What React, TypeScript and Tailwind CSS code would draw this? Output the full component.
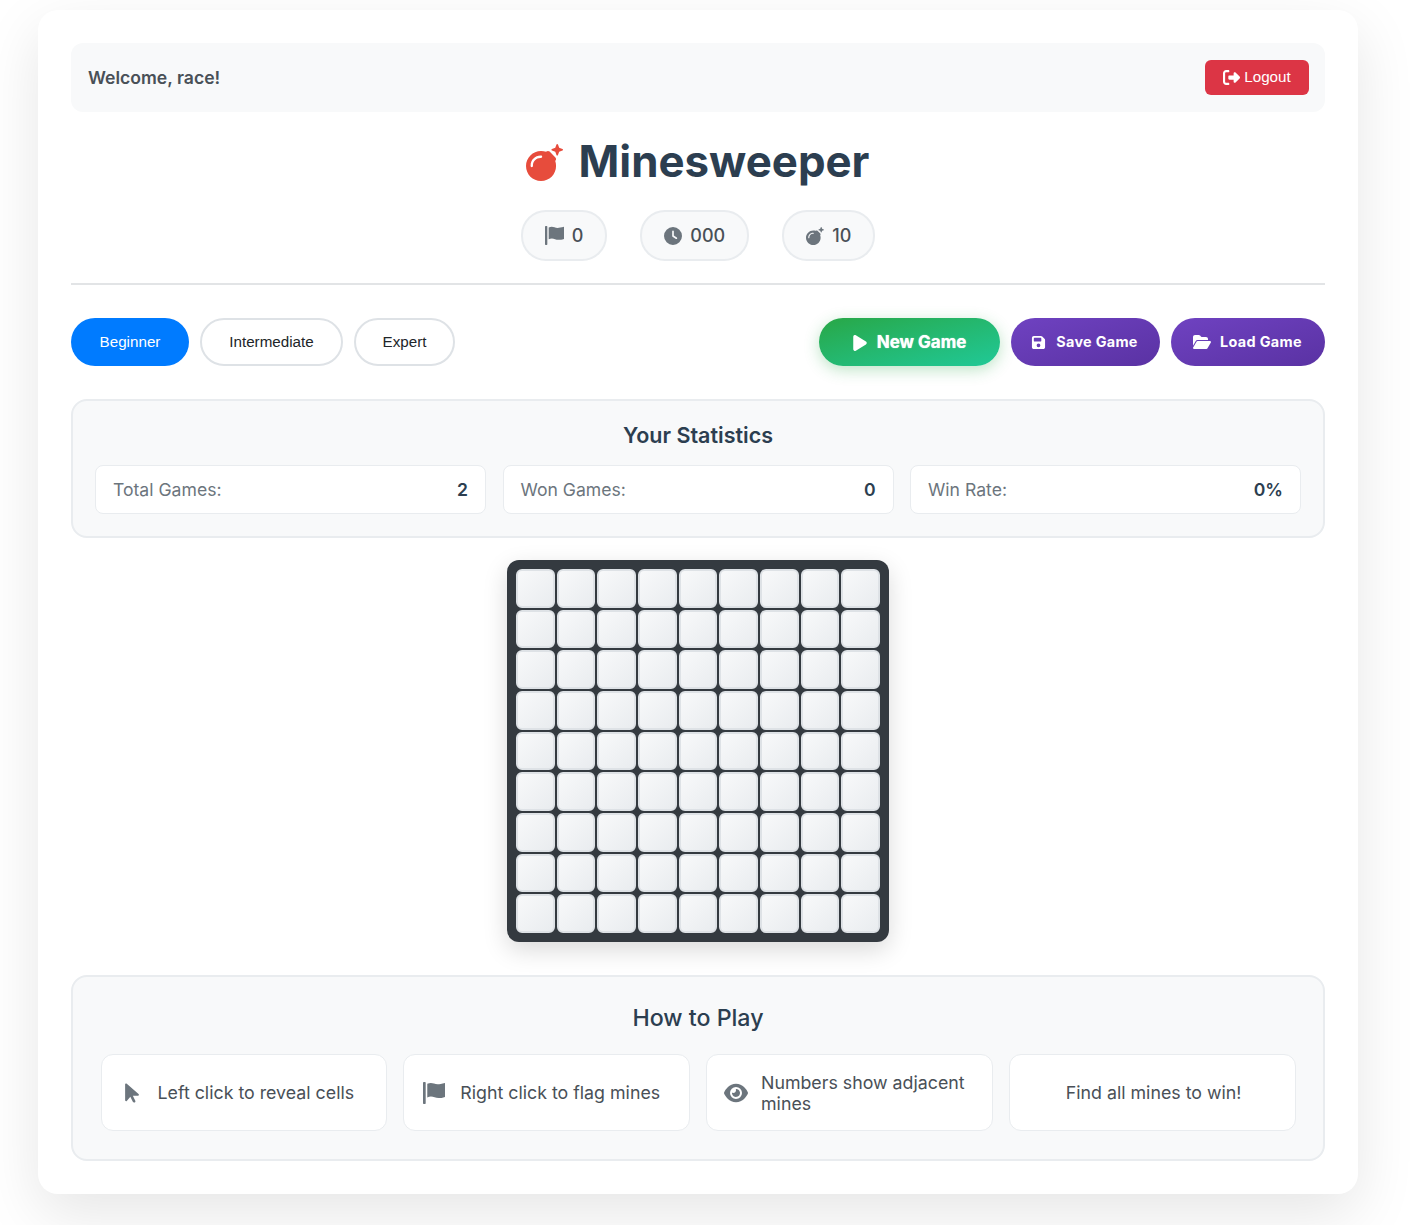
import React from 'react';
import { FaArrowPointer, FaBomb, FaClock, FaEye, FaFloppyDisk, FaFolderOpen, FaPlay, FaRightFromBracket } from 'react-icons/fa6';

const stats = [
  { label: 'Total Games:', value: '2' },
  { label: 'Won Games:', value: '0' },
  { label: 'Win Rate:', value: '0%' },
];

const cells = Array.from({ length: 81 }, (_, i) => i);

function FlagIcon({ size }: { size: number }) {
  return <svg width={size} height={size} viewBox="0 0 18 18" fill="currentColor" className="shrink-0">
      <rect x="0" y="0" width="2.2" height="18" rx="0.6" />
      <path d="M3.5 1.5C5.5 0.5 7 0.5 9 1.3C11 2.1 13 2.2 18 0.8V12.2C14 13.5 11.5 13.3 9.5 12.5C7.5 11.7 5.5 11.6 3.5 12.6Z" />
    </svg>;
}

function StatPill({ icon, value }: { icon: React.ReactNode; value: string }) {
  return <div className="flex h-[51px] items-center gap-[8px] rounded-[25px] border-2 border-[#e9ecef] bg-[#f8f9fa] px-[22px] text-[18px] font-medium text-[#495057]">
      <span className="text-[#6c757d]">{icon}</span>
      <span>{value}</span>
    </div>;
}

export default function App() {
  return <div className="min-h-[1225px] bg-white pl-[38px] pt-[10px] font-['Inter',sans-serif]">
      <div className="h-[1184px] w-[1320px] rounded-[20px] bg-white p-[33px] shadow-[0_20px_60px_rgba(0,0,0,0.1)]">
        <div className="flex h-[69px] items-center justify-between rounded-[12px] bg-[#f8f9fa] pl-[17px] pr-[16px]">
          <span className="pt-[1px] text-[17.6px] font-semibold text-[#495057]">Welcome, race!</span>
          <button className="flex h-[35px] w-[104px] items-center justify-center gap-[4px] rounded-[6px] bg-[#dc3545] font-['Liberation_Sans',sans-serif] text-[15.2px] text-white">
            <FaRightFromBracket size={17} />
            Logout
          </button>
        </div>

        <div className="mt-[16px] flex items-center justify-center gap-[16px] pr-[1px] text-[43.8px] font-bold leading-[68px] text-[#2c3e50]">
          <FaBomb className="text-[#e74c3c]" size={37} />
          <h1>Minesweeper</h1>
        </div>

        <div className="mt-[14px] flex justify-center gap-[33px]">
          <StatPill icon={<FlagIcon size={19} />} value="0" />
          <StatPill icon={<FaClock size={18} />} value="000" />
          <StatPill icon={<FaBomb size={18} />} value="10" />
        </div>

        <div className="mt-[22px] h-[2px] bg-[#e2e4e6]" />

        <div className="mt-[33px] flex items-center justify-between">
          <div className="flex gap-[11px] font-['Liberation_Sans',sans-serif] text-[15.2px]">
            <button className="h-[48px] w-[118px] rounded-[25px] bg-[#007bff] text-white">Beginner</button>
            <button className="h-[48px] w-[143px] rounded-[25px] border-2 border-[#dee2e6] bg-white text-[#212529]">Intermediate</button>
            <button className="h-[48px] w-[101px] rounded-[25px] border-2 border-[#dee2e6] bg-white text-[#212529]">Expert</button>
          </div>
          <div className="flex gap-[11px]">
            <button className="flex h-[48px] w-[181px] items-center justify-center gap-[8px] rounded-[25px] bg-gradient-to-br from-[#28a745] to-[#20c997] pr-[2px] pt-[1px] text-[17px] font-bold text-white shadow-[0_4px_15px_rgba(40,167,69,0.3)] [text-shadow:0_0_1px_rgba(255,255,255,0.9)]">
              <FaPlay size={18} />
              New Game
            </button>
            <button className="flex h-[48px] w-[149px] items-center justify-center gap-[10px] rounded-[25px] bg-gradient-to-br from-[#6f42c1] to-[#5a32a3] pr-[2px] text-[14.4px] font-bold tracking-[0.3px] text-white">
              <FaFloppyDisk size={15} />
              Save Game
            </button>
            <button className="flex h-[48px] w-[154px] items-center justify-center gap-[9px] rounded-[25px] bg-gradient-to-br from-[#6f42c1] to-[#5a32a3] pr-[1px] text-[14.4px] font-bold tracking-[0.35px] text-white">
              <FaFolderOpen size={18} />
              Load Game
            </button>
          </div>
        </div>

        <section className="mt-[33px] h-[139px] rounded-[16px] border-2 border-[#e9ecef] bg-[#f8f9fa] px-[22px] pt-[20px]">
          <h3 className="text-center text-[21.5px] font-semibold leading-[28px] text-[#2c3e50]">Your Statistics</h3>
          <div className="mt-[16px] grid grid-cols-3 gap-[16.5px]">
            {stats.map(stat => <div key={stat.label} className="flex h-[49px] items-center justify-between rounded-[8px] border border-[#e9ecef] bg-white px-[17px] pt-[1px] text-[17.6px]">
                <span className="text-[#6c757d]">{stat.label}</span>
                <span className="font-semibold text-[#2c3e50]">{stat.value}</span>
              </div>)}
          </div>
        </section>

        <div className="mt-[22px] flex justify-center">
          <div className="grid h-[382px] w-[382px] grid-cols-9 gap-[2px] rounded-[12px] bg-[#343a40] p-[8.8px] shadow-[0_8px_25px_rgba(0,0,0,0.15)]">
            {cells.map(cell => <div key={cell} className="rounded-[6px] border-2 border-[#dee2e6] bg-gradient-to-br from-[#f8f9fa] to-[#e9ecef]" />)}
          </div>
        </div>

        <section className="mt-[33px] h-[186px] rounded-[16px] border-2 border-[#e9ecef] bg-[#f8f9fa] px-[27.5px] pt-[26px]">
          <h3 className="text-center text-[23.2px] font-medium leading-[30px] text-[#2c3e50]">How to Play</h3>
          <div className="mt-[21px] grid grid-cols-4 gap-[16px] text-[17.8px] leading-[21px] text-[#495057]">
            <div className="flex h-[77px] items-center gap-[15px] rounded-[12px] border border-[#e9ecef] bg-white px-[20px]">
              <FaArrowPointer className="-ml-[1px] shrink-0 text-[#6c757d]" size={22} />
              <span>Left click to reveal cells</span>
            </div>
            <div className="flex h-[77px] items-center gap-[15px] rounded-[12px] border border-[#e9ecef] bg-white px-[19px]">
              <span className="text-[#6c757d]"><FlagIcon size={22} /></span>
              <span>Right click to flag mines</span>
            </div>
            <div className="flex h-[77px] items-center gap-[13px] rounded-[12px] border border-[#e9ecef] bg-white px-[17px]">
              <FaEye className="shrink-0 text-[#6c757d]" size={24} />
              <span>Numbers show adjacent mines</span>
            </div>
            <div className="flex h-[77px] items-center justify-center rounded-[12px] border border-[#e9ecef] bg-white pl-[23px] pr-[20px]">
              <span>Find all mines to win!</span>
            </div>
          </div>
        </section>
      </div>
    </div>;
}
